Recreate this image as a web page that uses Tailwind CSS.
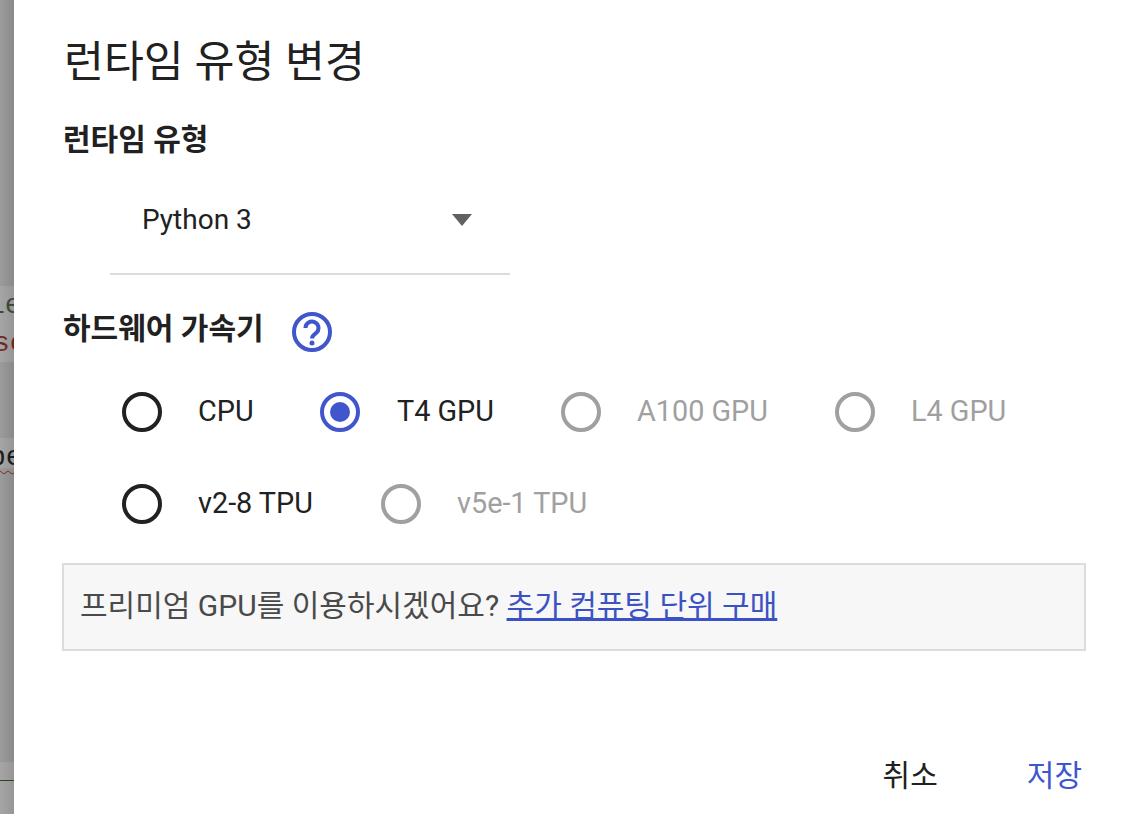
<!DOCTYPE html>
<html lang="ko">
<head>
    <meta charset="UTF-8">
    <title>런타임 유형 변경</title>
    <script src="https://cdn.jsdelivr.net/npm/@tailwindcss/browser@4"></script>
</head>
<body class="bg-white font-['Roboto','Noto_Sans_CJK_KR',sans-serif] text-[#212121]">
    <div class="flex h-[814px] w-[1128px] overflow-hidden">
        <!-- page behind the dialog -->
        <div class="relative h-full w-[14px] shrink-0 overflow-hidden bg-gradient-to-r from-[#9c9c9c] to-[#8a8a8a]">
            <div class="absolute left-0 top-[286px] h-[76px] w-full bg-white/10"></div>
            <div class="absolute left-0 top-[438px] h-[30px] w-full bg-white/10"></div>
            <div class="absolute bottom-0 left-0 h-[52px] w-full bg-white/10"></div>
            <span class="absolute left-[-12px] top-[290px] font-['Liberation_Mono'] text-[28px] leading-[32px] text-[#3c4a3c]">1e</span>
            <span class="absolute left-[-7px] top-[328px] font-['Liberation_Mono'] text-[28px] leading-[32px] text-[#6e2a20]">se</span>
            <span class="absolute left-[-11px] top-[442px] font-['Liberation_Mono'] text-[28px] leading-[32px] text-[#1c1c1c]">pe</span>
            <svg class="absolute left-0 top-[470px] h-[6px] w-[14px]" viewBox="0 0 14 6" fill="none"><path d="M0 1l4 3 4-3 4 3 2-1" stroke="#8a2a20" stroke-width="1"/></svg>
            <div class="absolute left-0 top-[780px] h-px w-full bg-[#2c4a10]"></div>
        </div>

        <!-- dialog -->
        <div class="flex min-w-0 grow flex-col pl-[48px] pr-[42px]">
            <h1 class="ml-[2px] mt-[34px] text-[43.4px] font-normal leading-[58px]">런타임 유형 변경</h1>
            <h2 class="ml-px mt-[30px] text-[30px] font-bold leading-[36px]">런타임 유형</h2>

            <div class="ml-[48px] mt-[17px] flex h-[100px] w-[400px] items-center justify-between border-b-2 border-[#dcdcdc] pb-[8px] pl-[32px] pr-[38px]">
                <span class="text-[28px]">Python 3</span>
                <svg class="h-[12px] w-[20px]" viewBox="0 0 20 12"><path d="M0 0h20L10 12z" fill="#616161"/></svg>
            </div>

            <div class="ml-px mt-[31px] flex items-center gap-[28px]">
                <h2 class="text-[30px] font-bold leading-[40px]">하드웨어 가속기</h2>
                <svg class="mt-[6px] h-[40px] w-[40px]" viewBox="0 0 40 40" fill="none">
                    <circle cx="20" cy="20" r="18" stroke="#4056cc" stroke-width="4"/>
                    <path d="M13.5 16a6.5 6.5 0 1 1 10.4 5.2c-2.4 1.8-3.9 2.8-3.9 5.3" stroke="#4056cc" stroke-width="4"/>
                    <circle cx="20" cy="31" r="2.5" fill="#4056cc"/>
                </svg>
            </div>

            <div class="ml-[60px] mt-[38px] flex h-[44px] items-center text-[28.8px]">
                <span class="h-[40px] w-[40px] rounded-full border-4 border-[#212121]"></span>
                <span class="ml-[36px] w-[122px]">CPU</span>
                <span class="flex h-[40px] w-[40px] items-center justify-center rounded-full border-4 border-[#4056cc]"><span class="h-[20px] w-[20px] rounded-full bg-[#4056cc]"></span></span>
                <span class="ml-[37px] w-[164px]">T4 GPU</span>
                <span class="h-[40px] w-[40px] rounded-full border-4 border-[#a0a0a0]"></span>
                <span class="ml-[36px] w-[198px] text-[#a0a0a0]">A100 GPU</span>
                <span class="h-[40px] w-[40px] rounded-full border-4 border-[#a0a0a0]"></span>
                <span class="ml-[36px] text-[#a0a0a0]">L4 GPU</span>
            </div>
            <div class="ml-[60px] mt-[48px] flex h-[44px] items-center text-[28.8px]">
                <span class="h-[40px] w-[40px] rounded-full border-4 border-[#212121]"></span>
                <span class="ml-[36px] w-[183px]">v2-8 TPU</span>
                <span class="h-[40px] w-[40px] rounded-full border-4 border-[#a0a0a0]"></span>
                <span class="ml-[36px] text-[#a0a0a0]">v5e-1 TPU</span>
            </div>

            <div class="mt-[37px] flex h-[88px] items-center border-2 border-[#dcdcdc] bg-[#f7f7f7] pb-[4px] pl-[16px] text-[30px] text-[#4a4a4a]">
                <span>프리미엄 GPU를 이용하시겠어요? <a class="text-[#3b52c4] underline" href="#">추가 컴퓨팅 단위 구매</a></span>
            </div>

            <div class="mt-auto flex justify-end gap-[89px] pb-[20px] pr-[4px] text-[30px] leading-[36px]">
                <button>취소</button>
                <button class="text-[#4056cc]">저장</button>
            </div>
        </div>
    </div>
</body>
</html>
